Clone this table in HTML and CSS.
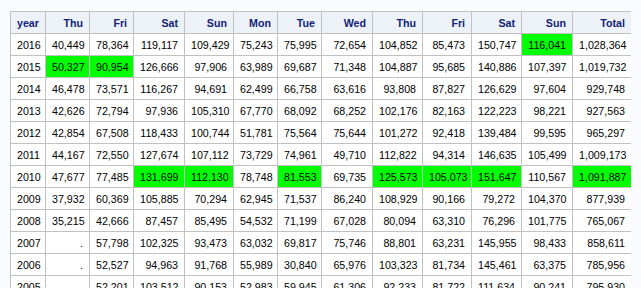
FILE: index.html
```html
<!DOCTYPE html>
<html lang="en">
<head>
    <meta charset="UTF-8">
    <title>Tagesfahrten pro Jahr</title>
    <link rel="stylesheet" href="styles.css">
</head>
<body>
    <table class="table">
        <colgroup>
            <col class="c-year">
            <col class="c44"><col class="c44"><col class="c51"><col class="c49">
            <col class="c44"><col class="c44"><col class="c51"><col class="c50">
            <col class="c49"><col class="c50"><col class="c51"><col class="c-total">
        </colgroup>
        <thead>
            <tr>
                <th class="left">year</th>
                <th>Thu</th><th>Fri</th><th>Sat</th><th>Sun</th><th>Mon</th><th>Tue</th>
                <th>Wed</th><th>Thu</th><th>Fri</th><th>Sat</th><th>Sun</th><th>Total</th>
            </tr>
        </thead>
        <tbody>
            <tr><td class="left">2016</td><td>40,449</td><td>78,364</td><td>119,117</td><td>109,429</td><td>75,243</td><td>75,995</td><td>72,654</td><td>104,852</td><td>85,473</td><td>150,747</td><td class="hi">116,041</td><td>1,028,364</td></tr>
            <tr><td class="left">2015</td><td class="hi">50,327</td><td class="hi">90,954</td><td>126,666</td><td>97,906</td><td>63,989</td><td>69,687</td><td>71,348</td><td>104,887</td><td>95,685</td><td>140,886</td><td>107,397</td><td>1,019,732</td></tr>
            <tr><td class="left">2014</td><td>46,478</td><td>73,571</td><td>116,267</td><td>94,691</td><td>62,499</td><td>66,758</td><td>63,616</td><td>93,808</td><td>87,827</td><td>126,629</td><td>97,604</td><td>929,748</td></tr>
            <tr><td class="left">2013</td><td>42,626</td><td>72,794</td><td>97,936</td><td>105,310</td><td>67,770</td><td>68,092</td><td>68,252</td><td>102,176</td><td>82,163</td><td>122,223</td><td>98,221</td><td>927,563</td></tr>
            <tr><td class="left">2012</td><td>42,854</td><td>67,508</td><td>118,433</td><td>100,744</td><td>51,781</td><td>75,564</td><td>75,644</td><td>101,272</td><td>92,418</td><td>139,484</td><td>99,595</td><td>965,297</td></tr>
            <tr><td class="left">2011</td><td>44,167</td><td>72,550</td><td>127,674</td><td>107,112</td><td>73,729</td><td>74,961</td><td>49,710</td><td>112,822</td><td>94,314</td><td>146,635</td><td>105,499</td><td>1,009,173</td></tr>
            <tr><td class="left">2010</td><td>47,677</td><td>77,485</td><td class="hi">131,699</td><td class="hi">112,130</td><td>78,748</td><td class="hi">81,553</td><td>69,735</td><td class="hi">125,573</td><td class="hi">105,073</td><td class="hi">151,647</td><td>110,567</td><td class="hi">1,091,887</td></tr>
            <tr><td class="left">2009</td><td>37,932</td><td>60,369</td><td>105,885</td><td>70,294</td><td>62,945</td><td>71,537</td><td>86,240</td><td>108,929</td><td>90,166</td><td>79,272</td><td>104,370</td><td>877,939</td></tr>
            <tr><td class="left">2008</td><td>35,215</td><td>42,666</td><td>87,457</td><td>85,495</td><td>54,532</td><td>71,199</td><td>67,028</td><td>80,094</td><td>63,310</td><td>76,296</td><td>101,775</td><td>765,067</td></tr>
            <tr><td class="left">2007</td><td>.</td><td>57,798</td><td>102,325</td><td>93,473</td><td>63,032</td><td>69,817</td><td>75,746</td><td>88,801</td><td>63,231</td><td>145,955</td><td>98,433</td><td>858,611</td></tr>
            <tr><td class="left">2006</td><td>.</td><td>52,527</td><td>94,963</td><td>91,768</td><td>55,989</td><td>30,840</td><td>65,976</td><td>103,323</td><td>81,734</td><td>145,461</td><td>63,375</td><td>785,956</td></tr>
            <tr><td class="left">2005</td><td>.</td><td>52,201</td><td>103,512</td><td>90,153</td><td>52,983</td><td>59,945</td><td>61,306</td><td>92,233</td><td>81,722</td><td>111,634</td><td>90,241</td><td>795,930</td></tr>
        </tbody>
    </table>
</body>
</html>
```

FILE: styles.css
```css
body {
    margin: 11px 10px;
    background-color: #fafbfe;
    font-family: "Liberation Sans", Arial, sans-serif;
    font-size: 10.67px;
    color: #000;
}

.table {
    table-layout: fixed;
    width: 622px;
    border-collapse: collapse;
    background-color: #fff;
}
.c-year { width: 35px; }
.c44 { width: 44px; }
.c49 { width: 49px; }
.c50 { width: 50px; }
.c51 { width: 51px; }
.c-total { width: 59px; }

th, td {
    border: 1px solid #c1c1c1;
    height: 22px;
    padding: 0 6px;
    text-align: right;
    white-space: nowrap;
    box-sizing: border-box;
}
th {
    background-color: #edf2f9;
    color: #112277;
    font-weight: bold;
}
.left {
    text-align: left;
}
td.hi {
    background-color: #00ff00;
}
```
